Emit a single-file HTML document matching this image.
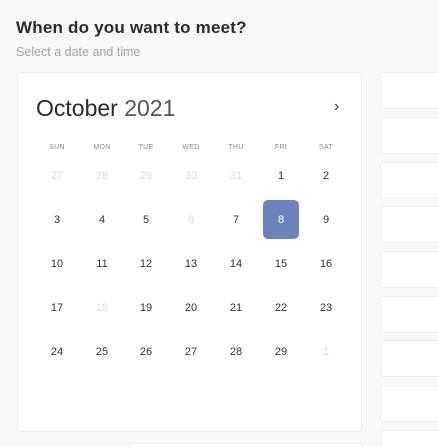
<!DOCTYPE html>
<html><head><style>
body{margin:0;width:438px;height:447px;background:#f8f8f8;font-family:"Liberation Sans",sans-serif;position:relative;overflow:hidden}
.t{position:absolute;left:16px;top:18px;font-size:17px;font-weight:bold;color:#2b2b2b;letter-spacing:.2px}
.s{position:absolute;left:16px;top:45px;font-size:12.5px;color:#a3a3a3}
.card{position:absolute;left:17px;top:72px;width:343px;height:358px;background:#fff;border:1px solid #eee;border-radius:5px}
.box{position:absolute;left:380px;width:57px;height:35px;background:#fff;border:1px solid #eee;border-right:none;border-radius:4px 0 0 4px}
.m{position:absolute;left:36px;top:95px;font-size:23px;color:#2a2a2a;font-weight:300}
.m span{color:#555}
.ch{position:absolute;left:334px;top:98px;font-size:16px;color:#333}
.c{position:absolute;width:36px;text-align:center;font-size:11px;color:#333;margin-left:-18px}
.h{font-size:7px;color:#888;letter-spacing:.3px}
.g{color:#d8dbe5}
.sel{position:absolute;left:263px;top:200px;width:36px;height:39px;background:#6b82bb;border-radius:5px}
</style></head><body>
<div class="t">When do you want to meet?</div>
<div class="s">Select a date and time</div>
<div class="card"></div>
<div class="box" style="top:72px"></div><div class="box" style="top:117px"></div><div class="box" style="top:162px"></div><div class="box" style="top:206px"></div><div class="box" style="top:251px"></div><div class="box" style="top:296px"></div><div class="box" style="top:340px"></div><div class="box" style="top:385px"></div><div class="box" style="top:430px;height:16px;border-bottom:none"></div>
<div class="box" style="left:129px;width:231px;top:443px;height:3px;border-bottom:none;border-right:1px solid #eee"></div>
<div class="m">October <span>2021</span></div>
<div class="ch">›</div>
<div class="sel"></div>
<div id="g"></div>
<script>
var xs=[57,102,146,191,236,281,326],ys=[177,221,265,309,353];
var hd=["SUN","MON","TUE","WED","THU","FRI","SAT"],h="";
hd.forEach(function(d,i){h+='<div class="c h" style="left:'+xs[i]+'px;top:144px">'+d+'</div>'});
var rows=[[27,28,29,30,31,1,2],[3,4,5,6,7,8,9],[10,11,12,13,14,15,16],[17,18,19,20,21,22,23],[24,25,26,27,28,29,1]];
var grey={"0-0":1,"0-1":1,"0-2":1,"0-3":1,"0-4":1,"1-3":1,"3-1":1,"4-6":1};
rows.forEach(function(r,ri){r.forEach(function(d,ci){var cl="c"+(grey[ri+"-"+ci]?" g":"");var st="";if(ri==1&&ci==5)st="color:#fff;";h+='<div class="'+cl+'" style="'+st+'left:'+xs[ci]+'px;top:'+(ys[ri]-7)+'px">'+d+'</div>'})});
document.getElementById("g").innerHTML=h;
</script>
</body></html>
